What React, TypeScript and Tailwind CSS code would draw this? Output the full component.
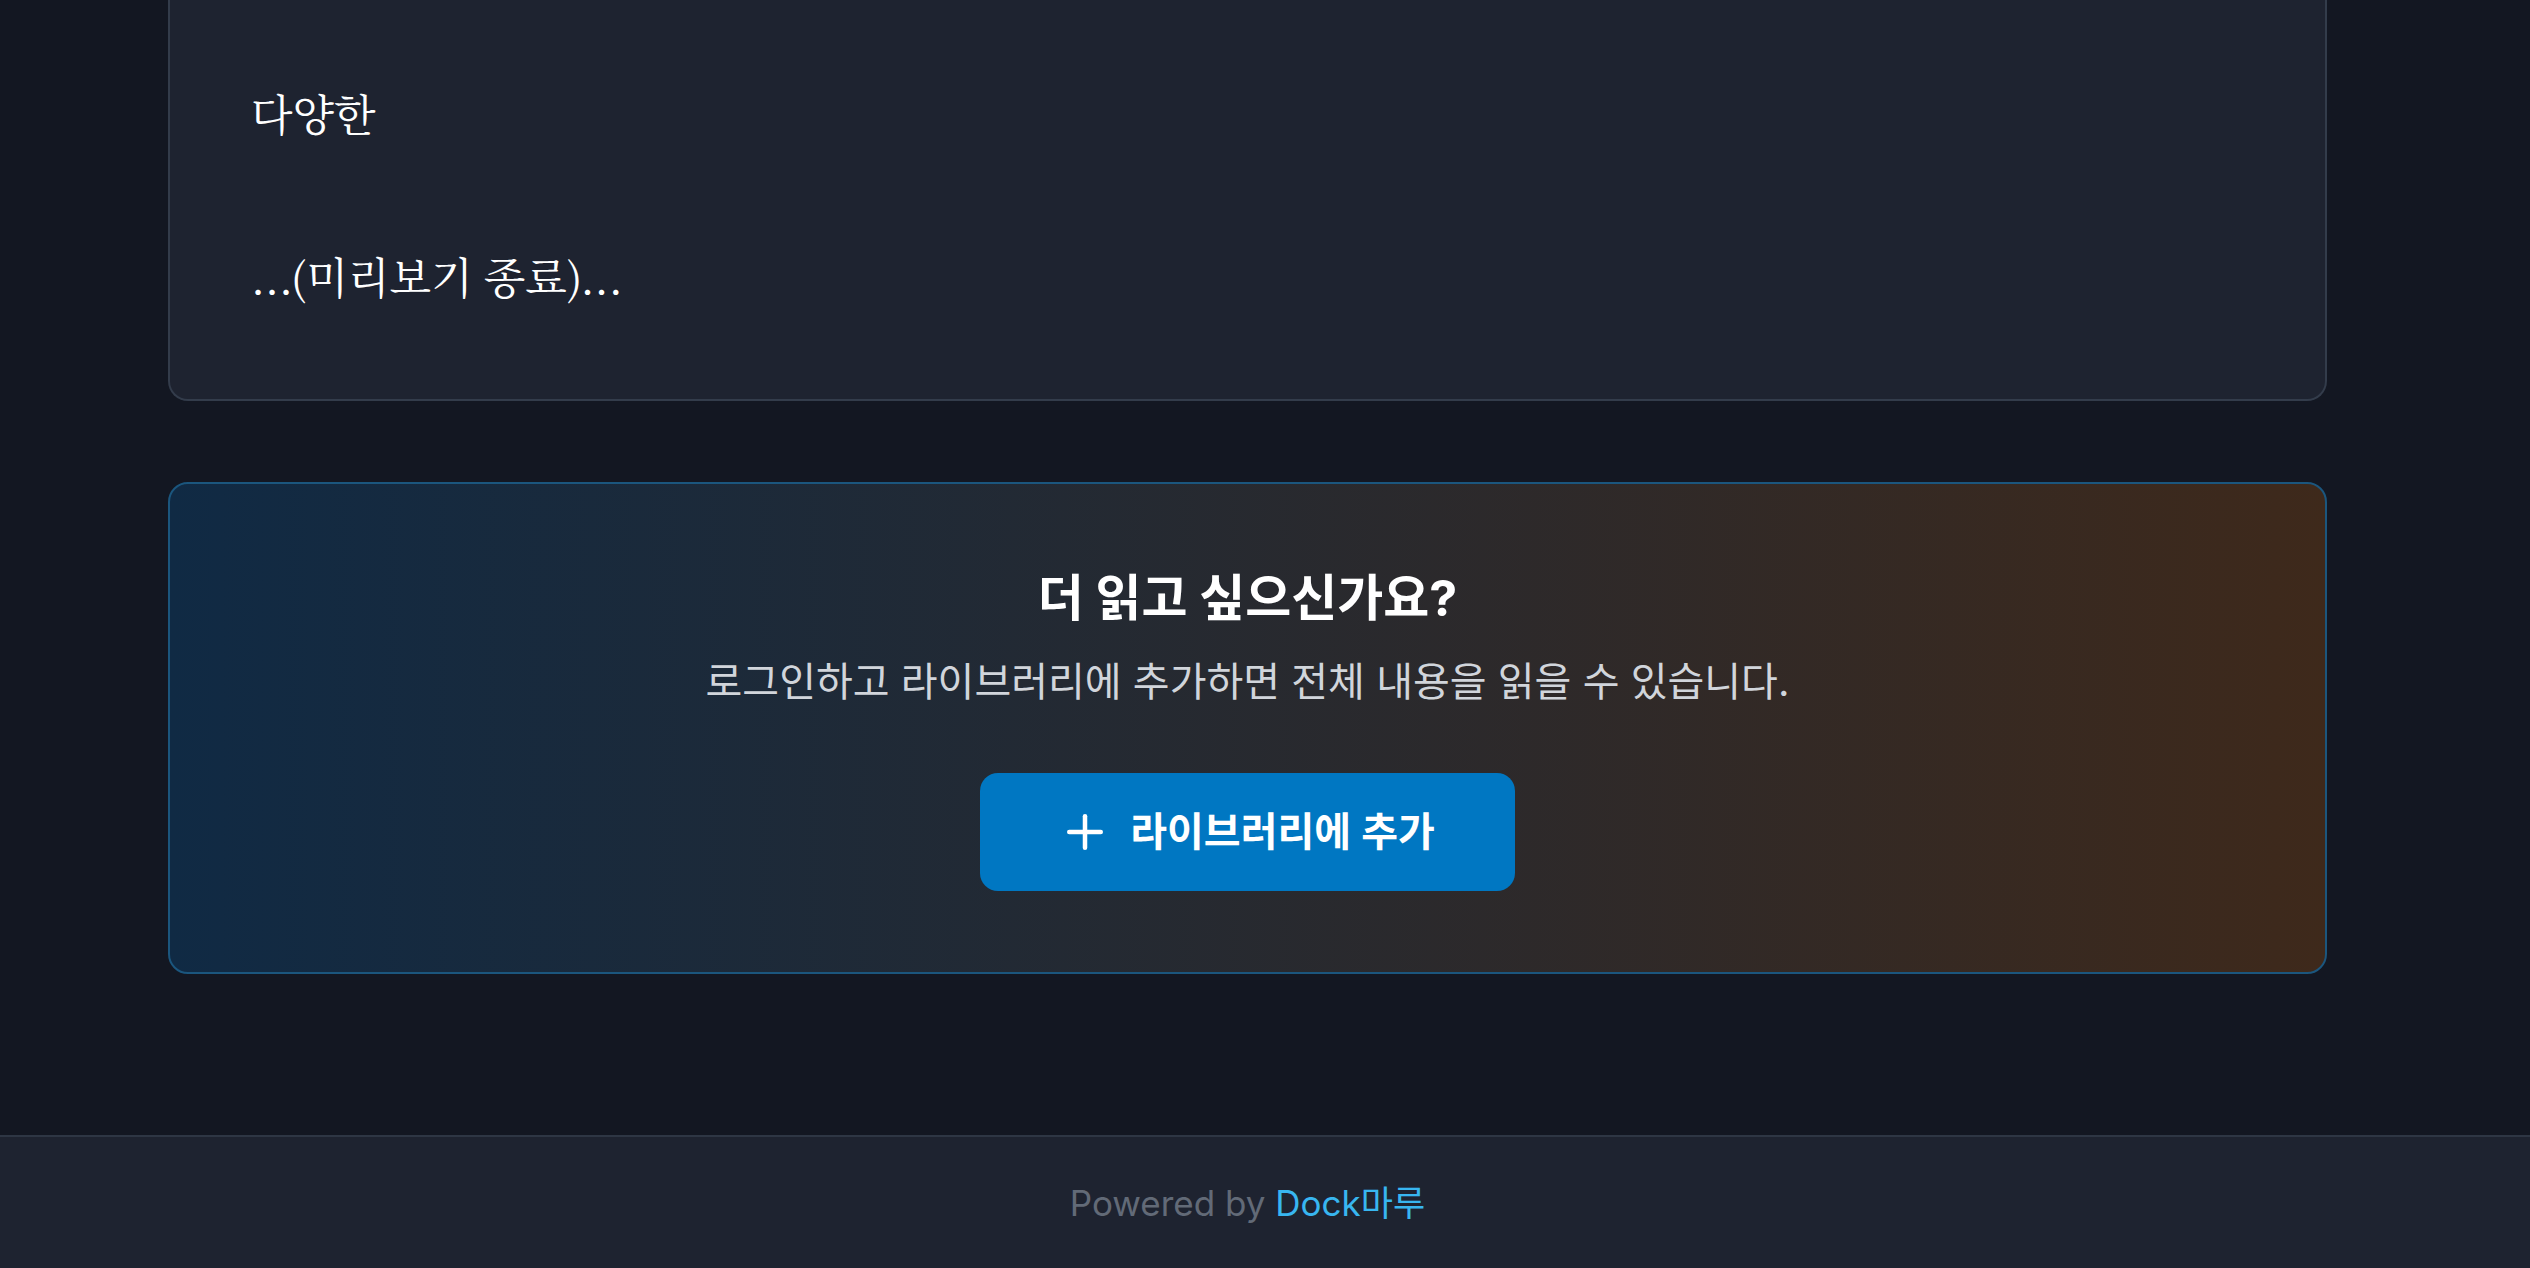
import React from "react";

function PlusIcon() {
  return (
    <svg width="54" height="54" viewBox="0 0 24 24" fill="none" stroke="currentColor" strokeWidth="2" strokeLinecap="round" strokeLinejoin="round">
      <path d="M5 12h14" />
      <path d="M12 5v14" />
    </svg>
  );
}

export default function App() {
  const sans = { fontFamily: 'Inter, "Noto Sans CJK KR", sans-serif' };
  return (
    <div className="min-h-screen bg-[#131722] flex flex-col" style={sans}>
      <main className="flex-1 flex flex-col pl-[168px] pr-[203px] pb-[161px]">
        <article className="bg-[#1e2330] border-x-2 border-b-2 border-[#333c4b] rounded-b-[20px] px-[81px] pt-[78px] pb-[88px] text-white text-[43px] leading-[70px]" style={{ fontFamily: '"Noto Serif CJK KR", "Noto Serif KR", serif' }}>
          <p>다양한</p>
          <p className="mt-[93px]">...(미리보기 종료)...</p>
        </article>

        <section className="mt-[81px] rounded-[20px] border-2 border-[#1b567e] bg-linear-to-r/srgb from-[#102a44] to-[#3e291b] pt-[84px] pb-[81px] px-[80px] flex flex-col items-center text-center">
          <h2 className="text-white font-bold text-[50px] leading-[60px]">더 읽고 싶으신가요?</h2>
          <p className="mt-[27px] text-[#d1d5db] text-[40px] leading-[54px]">로그인하고 라이브러리에 추가하면 전체 내용을 읽을 수 있습니다.</p>
          <button className="mt-[64px] flex items-center gap-[18px] bg-[#0077c2] text-white rounded-[18px] pl-[78px] pr-[80px] py-[27px] text-[40px] leading-[64px] font-semibold">
            <PlusIcon />
            <span>라이브러리에 추가</span>
          </button>
        </section>
      </main>

      <footer className="bg-[#1e2330] border-t-2 border-[#2e3644] pt-[39px] pb-[39px] pl-[168px] pr-[203px] flex justify-center text-[35px] leading-[54px]">
        <p className="text-[#626a77]">
          Powered by <span className="text-[#38b6f0]">Dock마루</span>
        </p>
      </footer>
    </div>
  );
}
